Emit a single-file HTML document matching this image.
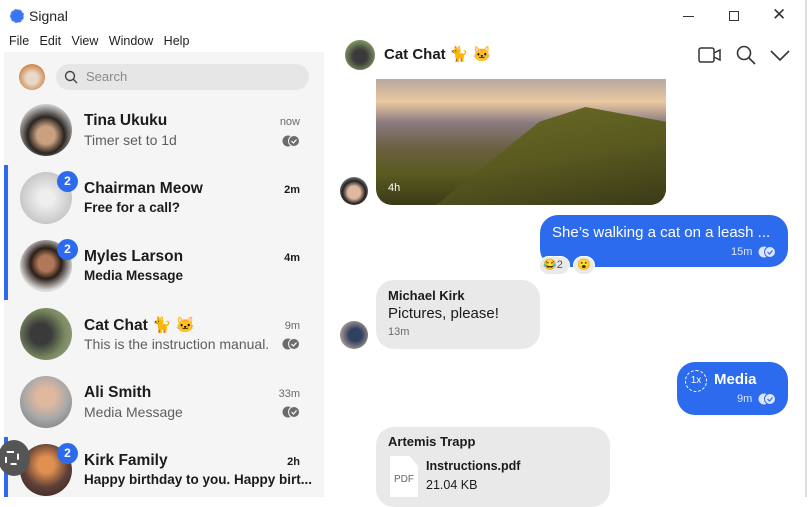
<!DOCTYPE html>
<html><head><meta charset="utf-8"><style>
*{box-sizing:border-box;margin:0;padding:0}
body{width:808px;height:497px;overflow:hidden;background:#fff;font-family:"Liberation Sans","Noto Sans CJK JP",sans-serif;color:#1b1b1b;position:relative}
.abs{position:absolute}
.side{left:4px;top:52px;width:320px;height:445px;background:#f5f5f5}
.av{position:absolute;border-radius:50%}
.name{position:absolute;left:84px;font-size:15.5px;font-weight:bold;color:#1b1b1b}
.sub{position:absolute;left:84px;font-size:14px;color:#5e5e5e;white-space:nowrap}
.subb{color:#1b1b1b;font-weight:bold;font-size:13.5px}
.time{position:absolute;left:250px;width:50px;text-align:right;font-size:11px;color:#6b6b6b}
.timeb{color:#1b1b1b;font-weight:bold}
.badge{position:absolute;width:21px;height:21px;border-radius:50%;background:#2c6bed;color:#fff;font-size:12px;font-weight:bold;text-align:center;line-height:21px;border:0}
.chk{position:absolute;left:282px;width:18px;height:12px}
.bar{position:absolute;left:4px;width:4px;background:#2c6bed}
.bub{position:absolute;border-radius:18px}
</style></head><body>
<div class="abs" style="left:10px;top:9px;width:14px;height:14px;border-radius:50%;background:#3a76f0;border:1px dashed #9bb8f5"></div>
<div class="abs" style="left:29px;top:8px;font-size:14px;color:#222">Signal</div>
<div class="abs" style="left:683px;top:16px;width:11px;height:1px;background:#333"></div>
<div class="abs" style="left:729px;top:11px;width:10px;height:10px;border:1px solid #333"></div>
<div class="abs" style="left:772px;top:5px;font-size:17px;color:#333">✕</div>
<div class="abs" style="left:9px;top:34px;font-size:12.5px;color:#222">File&nbsp;&nbsp;&nbsp;Edit&nbsp;&nbsp;&nbsp;View&nbsp;&nbsp;&nbsp;Window&nbsp;&nbsp;&nbsp;Help</div>
<div class="abs" style="left:805px;top:0;width:2px;height:497px;background:#ddd"></div>

<div class="abs side"></div>
<div class="av" style="left:19px;top:64px;width:26px;height:26px;background:radial-gradient(circle at 50% 55%,#e8d8c8 30%,#d08a50 70%)"></div>
<div class="abs" style="left:56px;top:64px;width:253px;height:26px;border-radius:13px;background:#e6e6e6"></div>
<svg class="abs" style="left:64px;top:70px" width="14" height="14" viewBox="0 0 14 14"><circle cx="6" cy="6" r="4.5" fill="none" stroke="#444" stroke-width="1.4"/><path d="M9.3 9.3L13 13" stroke="#444" stroke-width="1.4"/></svg>
<div class="abs" style="left:86px;top:69px;font-size:13px;color:#8a8a8a">Search</div>

<div class="av" style="left:20px;top:104px;width:52px;height:52px;background:radial-gradient(circle at 50% 60%,#c9a080 22%,#2a2420 45%,#ccc 75%)"></div>
<div class="name" style="top:112px">Tina Ukuku</div><div class="sub" style="top:132px">Timer set to 1d</div>
<div class="time" style="top:116px">now</div>
<svg class="chk" style="top:135px" viewBox="0 0 18 12"><circle cx="6" cy="6" r="5.5" fill="#6b6b6b"/><circle cx="12" cy="6" r="5.5" fill="#6b6b6b" stroke="#f5f5f5" stroke-width="1"/><path d="M9.5 6l2 2 3-3.5" stroke="#fff" stroke-width="1.2" fill="none"/></svg>

<div class="bar" style="top:165px;height:135px"></div>
<div class="av" style="left:20px;top:172px;width:52px;height:52px;background:radial-gradient(circle,#eee 20%,#c8c8c8 70%,#bbb)"></div>
<div class="badge" style="left:57px;top:171px">2</div>
<div class="name" style="top:180px">Chairman Meow</div><div class="sub subb" style="top:200px">Free for a call?</div>
<div class="time timeb" style="top:184px">2m</div>

<div class="av" style="left:20px;top:240px;width:52px;height:52px;background:radial-gradient(circle at 50% 45%,#b07858 20%,#2a1e18 40%,#ddd 70%)"></div>
<div class="badge" style="left:57px;top:239px">2</div>
<div class="name" style="top:248px">Myles Larson</div><div class="sub subb" style="top:268px">Media Message</div>
<div class="time timeb" style="top:252px">4m</div>

<div class="av" style="left:20px;top:308px;width:52px;height:52px;background:radial-gradient(circle at 40% 50%,#3a3a3a 25%,#7a8a60 60%,#a0a890)"></div>
<div class="name" style="top:316px">Cat Chat 🐈 🐱</div><div class="sub" style="top:336px">This is the instruction manual.</div>
<div class="time" style="top:320px">9m</div>
<svg class="chk" style="top:338px" viewBox="0 0 18 12"><circle cx="6" cy="6" r="5.5" fill="#6b6b6b"/><circle cx="12" cy="6" r="5.5" fill="#6b6b6b" stroke="#f5f5f5" stroke-width="1"/><path d="M9.5 6l2 2 3-3.5" stroke="#fff" stroke-width="1.2" fill="none"/></svg>

<div class="av" style="left:20px;top:376px;width:52px;height:52px;background:radial-gradient(circle at 50% 40%,#e0b8a0 22%,#a8a8a8 55%,#707070)"></div>
<div class="name" style="top:384px">Ali Smith</div><div class="sub" style="top:404px">Media Message</div>
<div class="time" style="top:388px">33m</div>
<svg class="chk" style="top:406px" viewBox="0 0 18 12"><circle cx="6" cy="6" r="5.5" fill="#6b6b6b"/><circle cx="12" cy="6" r="5.5" fill="#6b6b6b" stroke="#f5f5f5" stroke-width="1"/><path d="M9.5 6l2 2 3-3.5" stroke="#fff" stroke-width="1.2" fill="none"/></svg>

<div class="bar" style="top:437px;height:60px"></div>
<div class="av" style="left:20px;top:444px;width:52px;height:52px;background:radial-gradient(circle at 50% 40%,#e09050 20%,#604038 55%,#2a2020)"></div>
<div class="av" style="left:-2px;top:440px;width:32px;height:36px;background:#555;border-radius:50%"></div>
<div class="abs" style="left:5px;top:451px;width:14px;height:14px;border:2px dashed #fff;border-radius:3px"></div>
<div class="badge" style="left:57px;top:443px">2</div>
<div class="name" style="top:452px">Kirk Family</div><div class="sub subb" style="top:472px">Happy birthday to you. Happy birt...</div>
<div class="time timeb" style="top:456px">2h</div>

<div class="av" style="left:345px;top:40px;width:30px;height:30px;background:radial-gradient(circle at 50% 55%,#3a3a3a 30%,#7a9060 70%)"></div>
<div class="abs" style="left:384px;top:45px;font-size:15px;font-weight:bold">Cat Chat 🐈 🐱</div>
<svg class="abs" style="left:698px;top:46px" width="24" height="18" viewBox="0 0 24 18"><rect x="1" y="2" width="15" height="14" rx="2" fill="none" stroke="#333" stroke-width="1.5"/><path d="M16 7l6-3v10l-6-3" fill="none" stroke="#333" stroke-width="1.5"/></svg>
<svg class="abs" style="left:736px;top:45px" width="20" height="20" viewBox="0 0 20 20"><circle cx="8" cy="8" r="6.5" fill="none" stroke="#333" stroke-width="1.6"/><path d="M13 13l6 6" stroke="#333" stroke-width="1.6"/></svg>
<svg class="abs" style="left:770px;top:50px" width="20" height="12" viewBox="0 0 20 12"><path d="M1 1l9 9 9-9" fill="none" stroke="#333" stroke-width="1.6"/></svg>

<div class="abs" style="left:376px;top:79px;width:290px;height:126px;border-radius:0 0 16px 16px;overflow:hidden;background:linear-gradient(180deg,#b8a8a0 0%,#e8c8a0 18%,#8a7a80 35%,#6a6040 55%,#5a5a20 75%,#3a3a18 100%)">
<div class="abs" style="left:60px;top:28px;width:230px;height:98px;background:linear-gradient(170deg,#6a6a28 0%,#5a5a20 50%,#3a3a18);clip-path:polygon(0 100%,45% 15%,65% 0,100% 15%,100% 100%)"></div>
</div>
<div class="abs" style="left:388px;top:182px;font-size:11px;color:#fff">4h</div>
<div class="av" style="left:340px;top:177px;width:28px;height:28px;background:radial-gradient(circle at 50% 55%,#e0b8a0 30%,#222 55%,#eee)"></div>

<div class="bub" style="left:540px;top:215px;width:248px;height:52px;background:#2c6bed"></div>
<div class="abs" style="left:552px;top:224px;font-size:15px;color:#fff">She’s walking a cat on a leash ...</div>
<div class="abs" style="left:731px;top:246px;font-size:11px;color:#dbe5fb">15m</div>
<svg class="abs" style="left:758px;top:246px" width="18" height="12" viewBox="0 0 18 12"><circle cx="6" cy="6" r="5.5" fill="#dbe5fb"/><circle cx="12" cy="6" r="5.5" fill="#dbe5fb" stroke="#2c6bed" stroke-width="1"/><path d="M9.5 6l2 2 3-3.5" stroke="#2c6bed" stroke-width="1.2" fill="none"/></svg>
<div class="abs" style="left:539px;top:256px;width:31px;height:19px;border-radius:10px;background:#e9e9e9;border:1px solid #fff;font-size:11px;line-height:17px;padding-left:3px;color:#555">😂2</div>
<div class="abs" style="left:573px;top:256px;width:22px;height:19px;border-radius:10px;background:#e9e9e9;border:1px solid #fff;font-size:11px;line-height:17px;text-align:center">😮</div>

<div class="bub" style="left:376px;top:280px;width:164px;height:69px;background:#e9e9e9"></div>
<div class="abs" style="left:388px;top:288px;font-size:13px;font-weight:bold">Michael Kirk</div>
<div class="abs" style="left:388px;top:305px;font-size:15px">Pictures, please!</div>
<div class="abs" style="left:388px;top:326px;font-size:11px;color:#6b6b6b">13m</div>
<div class="av" style="left:340px;top:321px;width:28px;height:28px;background:radial-gradient(circle at 55% 50%,#304060 30%,#a09090 70%)"></div>

<div class="bub" style="left:677px;top:362px;width:111px;height:53px;background:#2c6bed"></div>
<div class="abs" style="left:685px;top:370px;width:22px;height:22px;border-radius:50%;border:1.5px dashed #fff;color:#fff;font-size:10px;text-align:center;line-height:19px">1x</div>
<div class="abs" style="left:714px;top:371px;font-size:15px;font-weight:bold;color:#fff">Media</div>
<div class="abs" style="left:737px;top:393px;font-size:11px;color:#dbe5fb">9m</div>
<svg class="abs" style="left:758px;top:393px" width="18" height="12" viewBox="0 0 18 12"><circle cx="6" cy="6" r="5.5" fill="#dbe5fb"/><circle cx="12" cy="6" r="5.5" fill="#dbe5fb" stroke="#2c6bed" stroke-width="1"/><path d="M9.5 6l2 2 3-3.5" stroke="#2c6bed" stroke-width="1.2" fill="none"/></svg>

<div class="abs" style="left:376px;top:427px;width:234px;height:80px;border-radius:18px;background:#e9e9e9"></div>
<div class="abs" style="left:388px;top:434px;font-size:13px;font-weight:bold">Artemis Trapp</div>
<div class="abs" style="left:390px;top:456px;width:28px;height:41px;background:#fff;clip-path:polygon(0 0,70% 0,100% 25%,100% 100%,0 100%)"></div>
<div class="abs" style="left:394px;top:474px;font-size:10px;color:#666">PDF</div>
<div class="abs" style="left:426px;top:459px;font-size:12.5px;font-weight:bold">Instructions.pdf</div>
<div class="abs" style="left:426px;top:478px;font-size:12.5px">21.04 KB</div>
</body></html>
